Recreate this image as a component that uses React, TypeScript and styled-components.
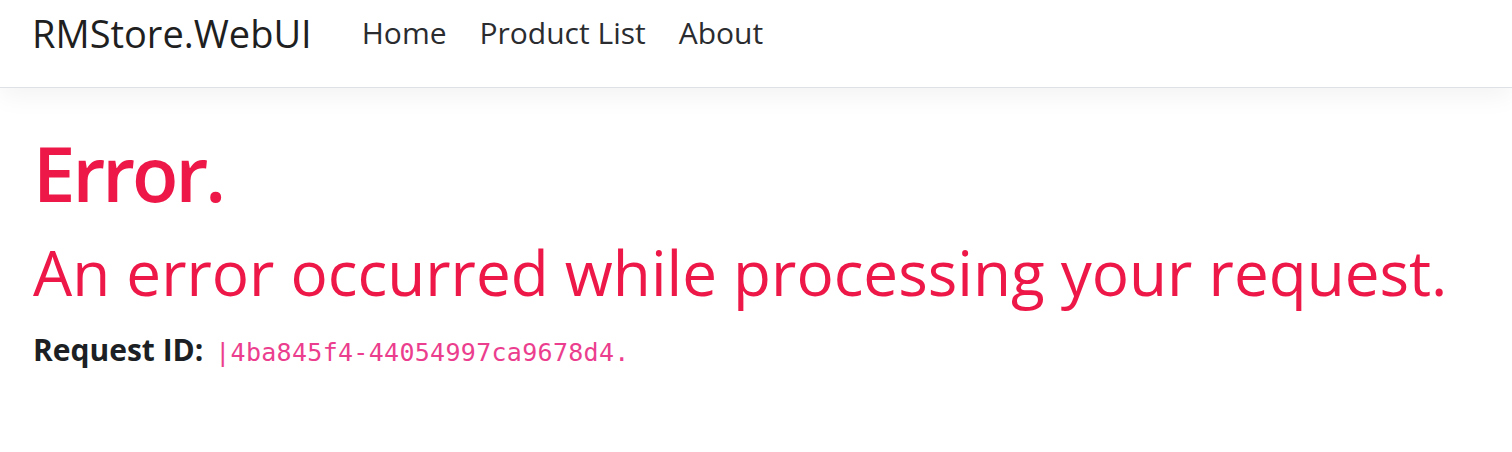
import React from "react";
import styled, { createGlobalStyle } from "styled-components";

const GlobalStyle = createGlobalStyle`
  html, body { margin: 0; padding: 0; background: #ffffff; }
  body { font-family: "Open Sans", "Noto Sans", sans-serif; color: #212529; }
  * { box-sizing: border-box; }
`;

const Navbar = styled.header`
  display: flex;
  align-items: center;
  height: 88px;
  padding: 0 32px 21px;
  background: #ffffff;
  border-bottom: 1px solid #dee2e6;
  box-shadow: 0 8px 24px rgba(0, 0, 0, 0.05);
`;

const Brand = styled.a`
  font-size: 38px;
  line-height: 46px;
  color: #1f1f1f;
  text-decoration: none;
  margin-right: 50px;
  white-space: nowrap;
`;

const NavList = styled.nav`
  display: flex;
  align-items: center;
  gap: 33px;
`;

const NavLink = styled.a`
  font-size: 30px;
  line-height: 40px;
  color: #2a2c2f;
  text-decoration: none;
  white-space: nowrap;
`;

const Main = styled.main`
  padding: 39px 33px 0;
  display: flex;
  flex-direction: column;
`;

const Title = styled.h1`
  margin: 0;
  font-size: 76px;
  font-weight: 600;
  letter-spacing: -3px;
  line-height: 91px;
  color: #ee1848;
`;

const Subtitle = styled.h2`
  margin: 17px 0 0;
  font-size: 62px;
  font-weight: 400;
  line-height: 74px;
  color: #ee1848;
  white-space: nowrap;
`;

const Para = styled.p`
  margin: 19px 0 0;
  font-size: 30px;
  line-height: 44px;
  white-space: nowrap;
`;

const Label = styled.strong`
  font-weight: 700;
  color: #1c1f23;
`;

const Code = styled.code`
  margin-left: 4px;
  font-family: "DejaVu Sans Mono", "Liberation Mono", monospace;
  font-size: 25px;
  letter-spacing: 0.3px;
  color: #ec3e8e;
`;

export default function App() {
  return (
    <>
      <GlobalStyle />
      <Navbar>
        <Brand href="#">RMStore.WebUI</Brand>
        <NavList>
          <NavLink href="#">Home</NavLink>
          <NavLink href="#">Product List</NavLink>
          <NavLink href="#">About</NavLink>
        </NavList>
      </Navbar>
      <Main>
        <Title>Error.</Title>
        <Subtitle>An error occurred while processing your request.</Subtitle>
        <Para>
          <Label>Request ID:</Label> <Code>|4ba845f4-44054997ca9678d4.</Code>
        </Para>
      </Main>
    </>
  );
}
